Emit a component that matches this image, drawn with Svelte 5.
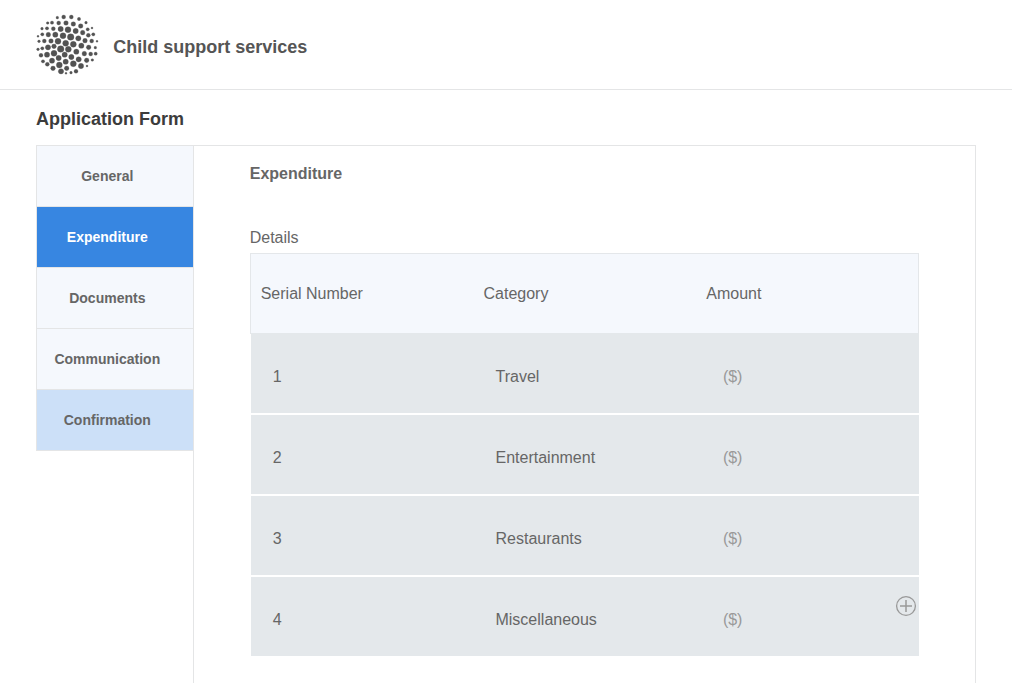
<script>
  const tabs = [
    { label: 'General' },
    { label: 'Expenditure', state: 'active' },
    { label: 'Documents' },
    { label: 'Communication' },
    { label: 'Confirmation', state: 'tinted' }
  ];
  const rows = ['Travel', 'Entertainment', 'Restaurants', 'Miscellaneous'];

  // Logo dots: centre x, centre y, radius
  const dots = [
    [76,23,4],[95,21,6],[118,21,6],[141,27,5],
    [47,39,4],[60,38,5],[80,39,6],[102,39,7],[124,42,7],[146,48,7],[162,38,4],
    [30,56,4],[45,55,5],[64,56,6],[86,57,8],[108,59,9],[131,63,8],[152,68,7],[167,58,5],[180,54,3],
    [18,79,3],[31,73,5],[49,74,7],[70,74,8],[93,77,9],[116,81,10],[139,85,8],[169,76,6],[184,73,5],
    [21,94,4],[37,93,6],[57,93,7],[78,94,9],[101,100,9],[124,103,9],[159,92,7],[179,93,6],[195,94,3],
    [18,118,4],[31,115,5],[48,112,8],[66,109,7],[86,117,10],[109,118,9],[148,107,8],[170,112,7],[190,113,4],
    [27,136,6],[45,134,8],[66,130,9],[98,134,8],[133,125,8],[157,131,7],[176,132,6],[191,131,5],
    [33,154,5],[60,152,8],[80,144,8],[118,141,8],[140,148,8],[164,151,7],[181,150,4],
    [46,163,6],[82,165,9],[101,155,8],[124,161,9],[147,168,8],[165,168,3],
    [63,175,7],[104,175,7],[87,184,8],[132,184,6],[117,188,4],[102,190,3]
  ];
</script>

<div class="page">
  <header>
    <svg class="logo" viewBox="0 0 216 210" aria-hidden="true">
      {#each dots as [x, y, r]}
        <circle cx={x} cy={y} {r} />
      {/each}
    </svg>
    <span>Child support services</span>
  </header>

  <h1>Application Form</h1>

  <div class="form">
    <nav>
      {#each tabs as tab}
        <button class={tab.state}>{tab.label}</button>
      {/each}
    </nav>
    <main>
      <h2>Expenditure</h2>
      <p>Details</p>
      <div class="table">
        <div class="head">
          <span>Serial Number</span><span>Category</span><span>Amount</span>
        </div>
        <div class="body">
          {#each rows as name, i}
            <div class="row">
              <span>{i + 1}</span><span>{name}</span><span class="amount">($)</span>
            </div>
          {/each}
          <svg class="add" viewBox="0 0 22 22" aria-hidden="true">
            <circle cx="11" cy="11" r="9.4" />
            <path d="M11 5v12M5 11h12" />
          </svg>
        </div>
      </div>
    </main>
  </div>
</div>

<style>
  :global(body) { background: #fff; overflow: hidden; }
  .page {
    height: 683px;
    overflow: hidden;
    box-sizing: border-box;
    font-family: "Liberation Sans", Arial, sans-serif;
    color: #666;
    font-size: 16px;
    line-height: 20px;
  }
  header {
    box-sizing: border-box;
    width: 1012px;
    height: 90px;
    padding: 10px 0 0 32px;
    border-bottom: 1px solid #e4e5e6;
    display: flex;
    gap: 9.2px;
    font-size: 18px;
    font-weight: bold;
    color: #555;
  }
  header span { padding-top: 27px; }
  .logo { width: 72px; height: 70px; fill: #525252; stroke: #525252; stroke-width: 0.8; }
  h1 {
    margin: 0;
    padding: 19px 0 16px 36px;
    font-size: 18px;
    line-height: 20px;
    color: #3c3c3c;
  }
  .form {
    box-sizing: border-box;
    width: 940px;
    height: 600px;
    margin-left: 36px;
    border-top: 1px solid #e4e5e6;
    border-right: 1px solid #e4e5e6;
    display: flex;
  }
  nav {
    width: 156px;
    align-self: flex-start;
    border-left: 1px solid #e4e5e6;
    display: flex;
    flex-direction: column;
  }
  button {
    height: 61px;
    padding: 0 15.4px 0 0;
    border: 0;
    border-bottom: 1px solid #e4e5e6;
    background: #f5f8fd;
    color: #666;
    font: bold 14px/20px "Liberation Sans", Arial, sans-serif;
    text-align: center;
  }
  .active { background: #3786e1; color: #fff; }
  .tinted { background: #cce0f8; }
  main { flex: 1; border-left: 1px solid #e4e5e6; padding: 18px 56px 0; }
  h2 { margin: 0 0 44px -0.3px; font-size: 16px; line-height: 20px; }
  p { margin: 0 0 5px -0.3px; }
  .head, .row { display: grid; grid-template-columns: 222.8px 222.8px 1fr; }
  .head {
    box-sizing: border-box;
    height: 81px;
    padding: 30px 0 0 9.7px;
    background: #f5f8fd;
    border: 1px solid #e4e7ea;
  }
  .body {
    position: relative;
    margin: -1px 0 0 1px;
    display: flex;
    flex-direction: column;
    gap: 2px;
  }
  .row { height: 46px; padding: 33px 0 0 21.7px; background: #e4e8eb; }
  .row:first-child { padding-top: 34px; }
  .amount { color: #999; padding-left: 4.6px; }
  .add {
    position: absolute;
    right: 2px;
    bottom: 39px;
    width: 22px;
    height: 22px;
    fill: none;
    stroke: #999;
    stroke-width: 1.3;
  }
  .add path { stroke-width: 1.5; }
</style>
